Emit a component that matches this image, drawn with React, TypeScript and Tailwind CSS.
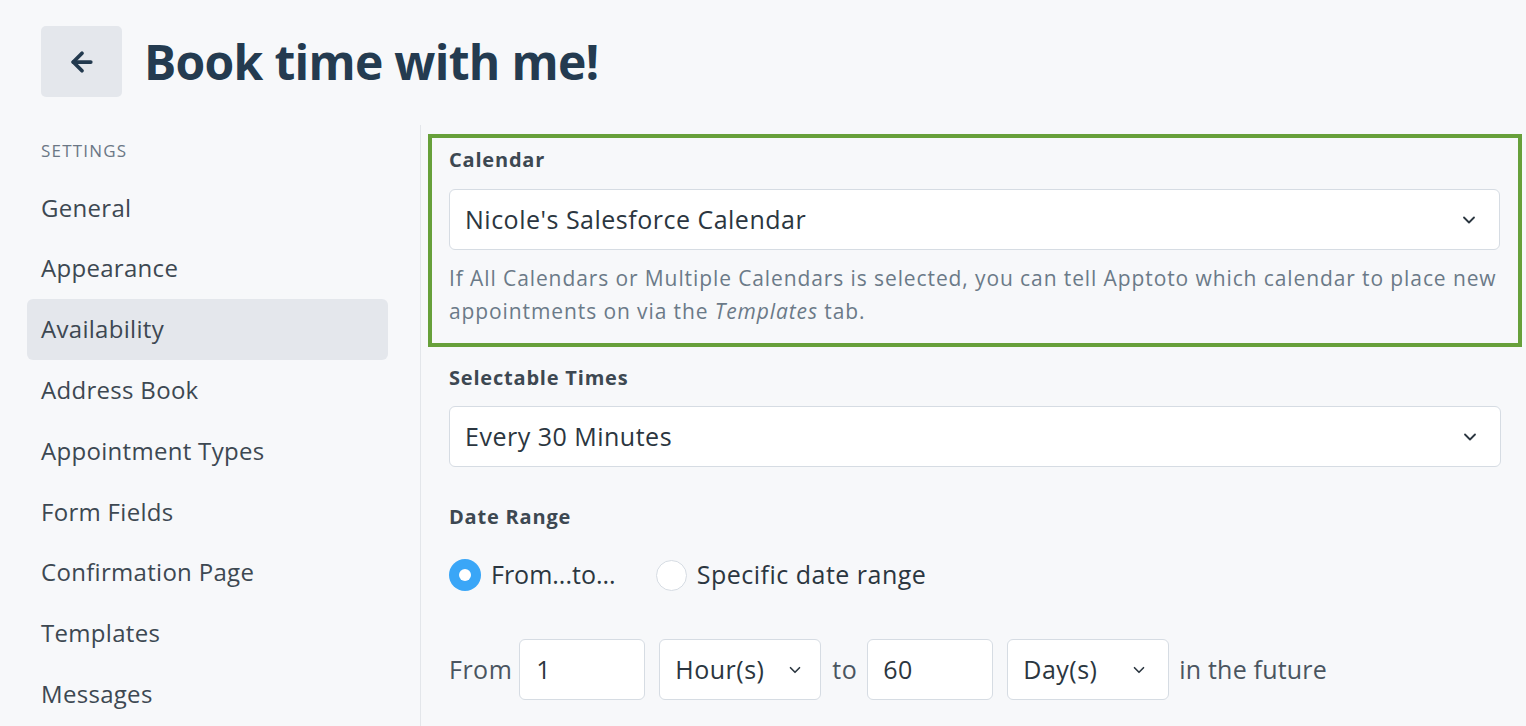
import { ArrowLeft, ChevronDown } from 'lucide-react';

const navItems = [
  'General',
  'Appearance',
  'Availability',
  'Address Book',
  'Appointment Types',
  'Form Fields',
  'Confirmation Page',
  'Templates',
  'Messages',
];

const bodyText = 'text-[25px] tracking-[0.5px] text-[#2b3640]';
const labelText = 'block text-[20px] tracking-[0.8px] font-bold text-[#3d4852] leading-[28px]';

function Select({ value, className }: { value: string; className?: string }) {
  return (
    <div className={`flex items-center justify-between h-[61px] bg-white border border-[#d6dce3] rounded-[6px] pl-[15px] pr-[20px] ${bodyText} ${className ?? ''}`}>
      <span>{value}</span>
      <ChevronDown className="w-[20px] h-[20px] text-[#2b3640]" strokeWidth={2.2} />
    </div>
  );
}

export default function App() {
  return (
    <div className="min-h-[726px] h-[726px] overflow-hidden bg-[#f7f8fa] text-[#3d4852]" style={{ fontFamily: '"Open Sans", Lato, sans-serif' }}>
      <div className="flex items-center pl-[41px] pt-[26px] gap-[22px]">
        <button className="w-[81px] h-[71px] rounded-[5px] bg-[#e4e7ec] flex items-center justify-center text-[#233a4f]">
          <ArrowLeft className="w-[30px] h-[30px]" strokeWidth={3} />
        </button>
        <h1 className="text-[48px] font-bold text-[#243b50] leading-none tracking-[-0.7px]">Book time with me!</h1>
      </div>

      <div className="flex mt-[28px]">
        <aside className="w-[420px] shrink-0 pl-[27px] pr-[32px] pt-[11px]">
          <div className="pl-[14px] text-[17px] font-medium text-[#6b7785] tracking-[1.2px] uppercase h-[30px] leading-[30px]">Settings</div>
          <nav className="mt-[11px] flex flex-col">
            {navItems.map((item) => (
              <div
                key={item}
                className={`h-[61px] -mb-[0.2px] flex items-center pl-[14px] rounded-[6px] text-[24px] tracking-[0.3px] text-[#3d4852] ${item === 'Availability' ? 'bg-[#e4e7ec]' : ''}`}
              >
                {item}
              </div>
            ))}
          </nav>
        </aside>

        <div className="w-px bg-[#e3e6ea] shrink-0 h-[620px]" />

        <main className="flex-1 pl-[7px] pr-[4px] pt-[9px]">
          <section className="border-[4px] border-[#67a03a] pl-[17px] pr-[18px] pt-[8px] pb-[15px]">
            <label className={labelText}>Calendar</label>
            <Select value="Nicole's Salesforce Calendar" className="mt-[15px]" />
            <p className="mt-[12px] text-[21px] tracking-[0.9px] leading-[33px] text-[#6b7a88]">
              If All Calendars or Multiple Calendars is selected, you can tell Apptoto which calendar to place new appointments on via the <em>Templates</em> tab.
            </p>
          </section>

          <div className="pl-[21px] pr-[21px]">
            <label className={`mt-[17px] ${labelText}`}>Selectable Times</label>
            <Select value="Every 30 Minutes" className="mt-[14px]" />

            <label className={`mt-[36px] ${labelText}`}>Date Range</label>

            <div className={`flex items-center mt-[28px] h-[32px] ${bodyText}`}>
              <span className="w-[32px] h-[32px] rounded-full bg-[#3aa6f7] flex items-center justify-center">
                <span className="w-[12px] h-[12px] rounded-full bg-white" />
              </span>
              <span className="ml-[10px] tracking-[0px]">From...to...</span>
              <span className="ml-[40px] w-[31px] h-[31px] rounded-full bg-white border border-[#d6dce3]" />
              <span className="ml-[10px]">Specific date range</span>
            </div>

            <div className={`flex items-center mt-[48px] ${bodyText}`}>
              <span className="text-[#4a5560]">From</span>
              <div className="ml-[7px] w-[126px] h-[61px] bg-white border border-[#d6dce3] rounded-[6px] flex items-center pl-[16px]">1</div>
              <div className="ml-[14px] w-[162px] h-[61px] bg-white border border-[#d6dce3] rounded-[6px] flex items-center justify-between pl-[15px] pr-[16px]">
                <span>Hour(s)</span>
                <ChevronDown className="w-[18px] h-[18px]" strokeWidth={2.2} />
              </div>
              <span className="ml-[11px] text-[#4a5560]">to</span>
              <div className="ml-[10px] w-[126px] h-[61px] bg-white border border-[#d6dce3] rounded-[6px] flex items-center pl-[15px]">60</div>
              <div className="ml-[14px] w-[162px] h-[61px] bg-white border border-[#d6dce3] rounded-[6px] flex items-center justify-between pl-[15px] pr-[20px]">
                <span>Day(s)</span>
                <ChevronDown className="w-[18px] h-[18px]" strokeWidth={2.2} />
              </div>
              <span className="ml-[10px] text-[#4a5560] tracking-[0.2px]">in the future</span>
            </div>
          </div>
        </main>
      </div>
    </div>
  );
}
